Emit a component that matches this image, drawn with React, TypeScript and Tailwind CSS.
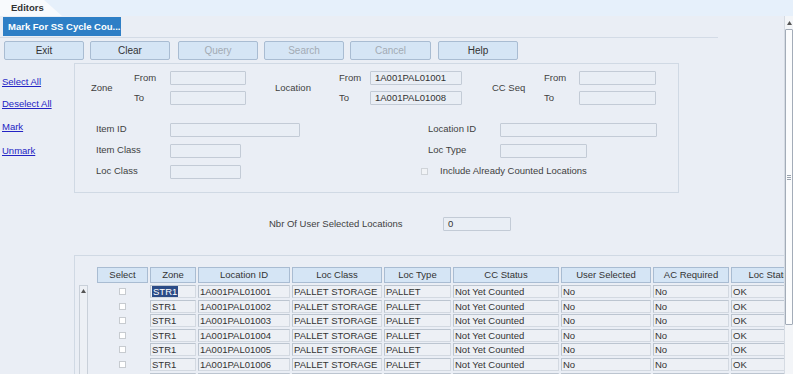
import React from 'react';

const font = { fontFamily: '"Liberation Sans", Arial, sans-serif' };

const buttons = [
    { label: 'Exit', disabled: false, w: 'w-[80px]', ml: 'ml-[4px]' },
    { label: 'Clear', disabled: false, w: 'w-[80px]', ml: 'ml-[6px]' },
    { label: 'Query', disabled: true, w: 'w-[80px]', ml: 'ml-[8px]' },
    { label: 'Search', disabled: true, w: 'w-[80px]', ml: 'ml-[6px]' },
    { label: 'Cancel', disabled: true, w: 'w-[81px]', ml: 'ml-[6px]' },
    { label: 'Help', disabled: false, w: 'w-[80px]', ml: 'ml-[7px]' },
];

const links = [
    { label: 'Select All', mt: 'mt-0' },
    { label: 'Deselect All', mt: 'mt-[10px]' },
    { label: 'Mark', mt: 'mt-[11px]' },
    { label: 'Unmark', mt: 'mt-[12px]' },
];

const columns = [
    { label: 'Select', w: 'w-[51px]' },
    { label: 'Zone', w: 'w-[46px]' },
    { label: 'Location ID', w: 'w-[92px]' },
    { label: 'Loc Class', w: 'w-[90px]' },
    { label: 'Loc Type', w: 'w-[67px]' },
    { label: 'CC Status', w: 'w-[106px]' },
    { label: 'User Selected', w: 'w-[90px]' },
    { label: 'AC Required', w: 'w-[76px]' },
    { label: 'Loc Status', w: 'w-[80px]' },
];

const rows = ['01001', '01002', '01003', '01004', '01005', '01006'];

function Field({ w, value }: { w: string; value?: string }) {
    return (
        <div className={`${w} h-[14px] border border-[#c3cbd6] bg-[#e9eef5] rounded-[1px] pl-[4px] text-[9.5px] leading-[12px] text-[#333]`}>
            {value}
        </div>
    );
}

function RangeGroup({ label, labelW, subW, inputW, values }: { label: string; labelW: string; subW: string; inputW: string; values: [string?, string?] }) {
    return (
        <div className="flex items-center">
            <div className={`${labelW} text-[9.5px] text-[#3f3f3f]`}>{label}</div>
            <div className="flex flex-col gap-[6px]">
                <div className="flex items-center">
                    <div className={`${subW} text-[9.5px] text-[#3f3f3f]`}>From</div>
                    <Field w={inputW} value={values[0]} />
                </div>
                <div className="flex items-center">
                    <div className={`${subW} text-[9.5px] text-[#3f3f3f]`}>To</div>
                    <Field w={inputW} value={values[1]} />
                </div>
            </div>
        </div>
    );
}

function LabeledField({ label, labelW, inputW }: { label: string; labelW: string; inputW: string }) {
    return (
        <div className="flex items-center h-[14px]">
            <div className={`${labelW} text-[9.5px] text-[#3f3f3f]`}>{label}</div>
            <Field w={inputW} />
        </div>
    );
}

function Cell({ w, children }: { w: string; children?: React.ReactNode }) {
    return (
        <div className={`${w} h-[13px] shrink-0 border border-[#bcc5d0] border-b-[#d3d9e1] border-r-[#d3d9e1] bg-[#edf0f5] pl-[1px] text-[9.5px] leading-[11px] text-[#333] whitespace-nowrap overflow-hidden`}>
            {children}
        </div>
    );
}

export default function App() {
    return (
        <div className="w-[793px] h-[374px] overflow-hidden bg-[#eaeef5] flex flex-col" style={font}>
            {/* Tab strip */}
            <div className="h-[16px] shrink-0 bg-[#e6f0fb] flex">
                <div className="w-[62px] h-[16px] bg-[#f8fafd] [clip-path:polygon(0_0,44px_0,62px_100%,0_100%)] pl-[11px] text-[9.5px] font-bold leading-[16px] text-[#333]">
                    Editors
                </div>
            </div>

            <div className="flex flex-1 min-h-0">
                <div className="flex-1 min-w-0 flex flex-col">
                    {/* Screen title tab */}
                    <div className="h-[22px] shrink-0 flex items-start">
                        <div className="w-[718px] h-[22px] border-b border-[#d3dbe6] pt-[1px]">
                            <div className="ml-[3px] w-[118px] h-[19px] bg-[#2e7fc6] text-white text-[9.5px] font-bold leading-[19px] pl-[5px] whitespace-nowrap">
                                Mark For SS Cycle Cou...
                            </div>
                        </div>
                    </div>

                    {/* Toolbar */}
                    <div className="flex mt-[3px] h-[19px] shrink-0">
                        {buttons.map((b) => (
                            <div
                                key={b.label}
                                className={`${b.w} ${b.ml} h-[19px] border border-[#a9bcd2] bg-[#d5e5f5] rounded-[2px] text-center text-[10px] leading-[17px] ${b.disabled ? 'text-[#a3abb4]' : 'text-[#333]'}`}
                            >
                                {b.label}
                            </div>
                        ))}
                    </div>

                    <div className="flex mt-[3px]">
                        {/* Left action links */}
                        <div className="w-[74px] shrink-0 flex flex-col pt-[13px] pl-[2px]">
                            {links.map((l) => (
                                <span key={l.label} className={`${l.mt} text-[9.5px] leading-[12px] text-[#2323c4] underline`}>
                                    {l.label}
                                </span>
                            ))}
                        </div>

                        <div className="flex-1 min-w-0 flex flex-col">
                            {/* Criteria panel */}
                            <div className="w-[605px] h-[130px] border border-[#d0d9e4] pt-[7px]">
                                <div className="flex">
                                    <div className="ml-[16px]">
                                        <RangeGroup label="Zone" labelW="w-[43px]" subW="w-[36px]" inputW="w-[76px]" values={[]} />
                                    </div>
                                    <div className="ml-[29px]">
                                        <RangeGroup label="Location" labelW="w-[64px]" subW="w-[31px]" inputW="w-[92px]" values={['1A001PAL01001', '1A001PAL01008']} />
                                    </div>
                                    <div className="ml-[30px]">
                                        <RangeGroup label="CC Seq" labelW="w-[52px]" subW="w-[35px]" inputW="w-[77px]" values={[]} />
                                    </div>
                                </div>

                                <div className="flex mt-[17px]">
                                    <div className="ml-[21px] flex flex-col gap-[7px]">
                                        <LabeledField label="Item ID" labelW="w-[74px]" inputW="w-[130px]" />
                                        <LabeledField label="Item Class" labelW="w-[74px]" inputW="w-[71px]" />
                                        <LabeledField label="Loc Class" labelW="w-[74px]" inputW="w-[71px]" />
                                    </div>
                                    <div className="ml-[121px] flex flex-col gap-[7px]">
                                        <div className="ml-[7px]">
                                            <LabeledField label="Location ID" labelW="w-[72px]" inputW="w-[157px]" />
                                        </div>
                                        <div className="ml-[7px]">
                                            <LabeledField label="Loc Type" labelW="w-[72px]" inputW="w-[87px]" />
                                        </div>
                                        <div className="flex items-center h-[14px]">
                                            <div className="w-[7px] h-[7px] border border-[#cfd3d8] bg-[#f1f3f6]" />
                                            <span className="ml-[12px] text-[9.5px] text-[#3f3f3f]">Include Already Counted Locations</span>
                                        </div>
                                    </div>
                                </div>
                            </div>

                            {/* Selected count */}
                            <div className="flex items-center mt-[24px] h-[14px]">
                                <span className="ml-[195px] w-[174px] text-[9.5px] text-[#3f3f3f]">Nbr Of User Selected Locations</span>
                                <Field w="w-[68px]" value="0" />
                            </div>

                            {/* Results table */}
                            <div className="mt-[24px] border-l border-t border-[#d0d9e4] pt-[11px] pl-[4px] flex">
                                <div className="w-[9px] shrink-0 pt-[18px]">
                                    <div className="w-[9px] h-[120px] border border-[#c9d0d9] bg-[#edf0f5] flex justify-center pt-[3px]">
                                        <svg width="5" height="4" viewBox="0 0 5 4">
                                            <path d="M0 4 L2.5 0 L5 4 Z" fill="#555" />
                                        </svg>
                                    </div>
                                </div>
                                <div className="ml-[9px] flex flex-col">
                                    <div className="flex gap-[2px]">
                                        {columns.map((c) => (
                                            <div
                                                key={c.label}
                                                className={`${c.w} h-[16px] shrink-0 border border-[#a9bcd2] bg-[#d5e5f5] text-center text-[9.5px] leading-[14px] text-[#333] whitespace-nowrap overflow-hidden`}
                                            >
                                                {c.label}
                                            </div>
                                        ))}
                                    </div>
                                    <div className="flex flex-col gap-[1.6px] mt-[2px]">
                                        {rows.map((r, i) => (
                                            <div key={r} className="flex gap-[2px] h-[13px]">
                                                <div className="w-[51px] h-[13px] shrink-0 flex items-center justify-center">
                                                    <div className="w-[7px] h-[7px] border border-[#c7cbd0] bg-white" />
                                                </div>
                                                <Cell w="w-[46px]">
                                                    {i === 0 ? <span className="bg-[#2b4b86] text-white px-[1px]">STR1</span> : 'STR1'}
                                                </Cell>
                                                <Cell w="w-[92px]">1A001PAL{r}</Cell>
                                                <Cell w="w-[90px]">PALLET STORAGE</Cell>
                                                <Cell w="w-[67px]">PALLET</Cell>
                                                <Cell w="w-[106px]">Not Yet Counted</Cell>
                                                <Cell w="w-[90px]">No</Cell>
                                                <Cell w="w-[76px]">No</Cell>
                                                <Cell w="w-[80px]">OK</Cell>
                                            </div>
                                        ))}
                                        {/* next row, scrolled below the fold */}
                                        <div className="flex gap-[2px] h-[13px]">
                                            <div className="w-[51px] h-[13px] shrink-0" />
                                            {columns.slice(1).map((c) => (
                                                <Cell key={c.label} w={c.w} />
                                            ))}
                                        </div>
                                    </div>
                                </div>
                            </div>
                        </div>
                    </div>
                </div>

                {/* Page scrollbar */}
                <div className="w-[9px] shrink-0 bg-[#f3f5f8] border-l border-[#d5dbe3] flex flex-col items-center pt-[5px]">
                    <svg width="5" height="4" viewBox="0 0 5 4">
                        <path d="M0 4 L2.5 0 L5 4 Z" fill="#555" />
                    </svg>
                    <div className="mt-[4px] w-[8px] h-[296px] border border-[#a3acb8] bg-[#fbfcfd] rounded-[1px] flex flex-col items-center justify-center gap-[1px]">
                        <div className="w-[4px] h-px bg-[#9aa3ae]" />
                        <div className="w-[4px] h-px bg-[#9aa3ae]" />
                        <div className="w-[4px] h-px bg-[#9aa3ae]" />
                    </div>
                </div>
            </div>
        </div>
    );
}
